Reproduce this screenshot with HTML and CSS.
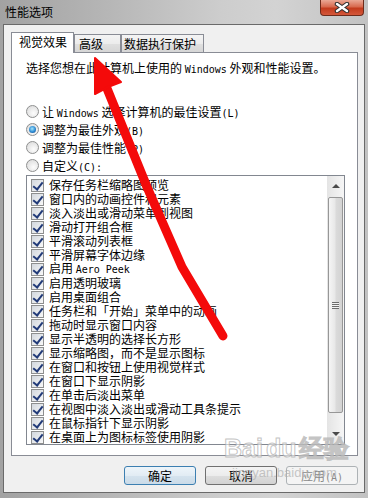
FILE: index.html
```html
<!DOCTYPE html>
<html>
<head>
  <title>性能选项</title>
  <link rel="stylesheet" href="styles.css">
</head>
<body>

  <div class="window">
    <div class="titlebar">
      <span class="title">性能选项</span>
      <div class="close">
        <svg width="16" height="11" viewBox="0 0 16 11">
          <path d="M3 2 L13 9 M13 2 L3 9" stroke="#2f2f2f" stroke-width="4.5" stroke-linecap="round"/>
          <path d="M3 2 L13 9 M13 2 L3 9" stroke="#fff" stroke-width="2.4" stroke-linecap="round"/>
        </svg>
      </div>
    </div>

    <div class="client">
      <div class="tabs">
        <div class="tab active">视觉效果</div>
        <div class="tab t2">高级</div>
        <div class="tab t3">数据执行保护</div>
      </div>

      <div class="panel">
        <p class="desc">选择您想在此计算机上使用的 <span class="en">Windows</span> 外观和性能设置。</p>

        <div class="radios">
          <div class="radio"><span class="dot"></span><span>让 <span class="en">Windows</span> 选择计算机的最佳设置<span class="en">(L)</span></span></div>
          <div class="radio"><span class="dot on"></span><span>调整为最佳外观<span class="en">(B)</span></span></div>
          <div class="radio"><span class="dot"></span><span>调整为最佳性能<span class="en">(P)</span></span></div>
          <div class="radio"><span class="dot"></span><span>自定义<span class="en">(C):</span></span></div>
        </div>

        <div class="listbox">
          <div class="items">
            <div class="item"><span class="check"></span>保存任务栏缩略图预览</div>
            <div class="item"><span class="check"></span>窗口内的动画控件和元素</div>
            <div class="item"><span class="check"></span>淡入淡出或滑动菜单到视图</div>
            <div class="item"><span class="check"></span>滑动打开组合框</div>
            <div class="item"><span class="check"></span>平滑滚动列表框</div>
            <div class="item"><span class="check"></span>平滑屏幕字体边缘</div>
            <div class="item"><span class="check"></span><span>启用 <span class="en">Aero Peek</span></span></div>
            <div class="item"><span class="check"></span>启用透明玻璃</div>
            <div class="item"><span class="check"></span>启用桌面组合</div>
            <div class="item"><span class="check"></span>任务栏和「开始」菜单中的动画</div>
            <div class="item"><span class="check"></span>拖动时显示窗口内容</div>
            <div class="item"><span class="check"></span>显示半透明的选择长方形</div>
            <div class="item"><span class="check"></span>显示缩略图，而不是显示图标</div>
            <div class="item"><span class="check"></span>在窗口和按钮上使用视觉样式</div>
            <div class="item"><span class="check"></span>在窗口下显示阴影</div>
            <div class="item"><span class="check"></span>在单击后淡出菜单</div>
            <div class="item"><span class="check"></span>在视图中淡入淡出或滑动工具条提示</div>
            <div class="item"><span class="check"></span>在鼠标指针下显示阴影</div>
            <div class="item"><span class="check"></span>在桌面上为图标标签使用阴影</div>
          </div>
          <div class="scrollbar">
            <div class="sb-btn"><span class="arrow-up"></span></div>
            <div class="thumb"><span class="grip"></span></div>
            <div class="track"></div>
            <div class="sb-btn"><span class="arrow-down"></span></div>
          </div>
        </div>
      </div>

      <div class="buttons">
        <div class="btn default">确定</div>
        <div class="btn">取消</div>
        <div class="btn disabled">应用<span class="en">(A)</span></div>
      </div>
    </div>

    <!-- watermark -->
    <div class="watermark">
      <div class="wm-logo">Bai<span class="wm-du">du</span>经验</div>
      <div class="wm-url">jingyan.baidu.com</div>
    </div>

    <!-- red arrow drawn over the dialog -->
    <svg class="arrow" width="368" height="498" viewBox="0 0 368 498">
      <path d="M106 86 L147 187 L182 267 L223 336" fill="none" stroke="#f40a0a" stroke-width="9" stroke-linecap="round" stroke-linejoin="round"/>
      <path d="M95 58 L121 82 L108 87 L95 94 Z" fill="#f40a0a" stroke="#f40a0a" stroke-width="2" stroke-linejoin="round"/>
    </svg>
  </div>

</body>
</html>
```

FILE: styles.css
```css
* {
  box-sizing: border-box;
}
body {
  margin: 0;
  font: 12px "Noto Sans CJK SC", sans-serif;
  color: #000;
}
.en {
  font-family: "DejaVu Sans Mono", monospace;
  font-size: 10px;
}
.window {
  position: relative;
  width: 368px;
  height: 498px;
  overflow: hidden;
  background: linear-gradient(to right, #a2a2a2 0%, #b3b3b3 25%, #cdcdcd 60%, #d3d3d3 75%, #c2c2c2 100%);
}
.titlebar {
  height: 24px;
  display: flex;
  align-items: flex-start;
}
.title {
  padding: 5px 0 0 5px;
  line-height: 14px;
  font-size: 12px;
}
.close {
  margin-left: auto;
  margin-right: 4px;
  width: 44px;
  height: 16px;
  border: 1px solid #6e2b1b;
  border-top: none;
  border-radius: 0 0 4px 4px;
  background: linear-gradient(#eaa895, #d86a4f 45%, #c33b1d 55%, #d4573a);
  display: flex;
  align-items: center;
  justify-content: center;
}

/* dialog body */
.client {
  margin-left: 3px;
  width: 362px;
  height: 469px;
  border: 1px solid #6a6a6a;
  background: #f0f0f0;
  padding: 7px 0 0 7px;
}
.tabs {
  display: flex;
  align-items: flex-end;
  height: 20px;
}
.tab {
  height: 18px;
  border: 1px solid #898c95;
  border-bottom: none;
  padding: 1px 0 0 4px;
  line-height: 16px;
  background: linear-gradient(#f4f4f4, #ececec 50%, #e0e0e0 50%, #d6d6d6);
}
.tab.active {
  width: 63px;
  height: 21px;
  margin-bottom: -1px;
  padding-left: 7px;
  background: #fff;
  position: relative;
  z-index: 1;
}
.t2 {
  width: 47px;
}
.t3 {
  width: 83px;
  padding-left: 2px;
}
.panel {
  width: 347px;
  height: 404px;
  border: 1px solid #898c95;
  background: #fff;
  padding: 8px 0 0 14px;
}
.desc {
  margin: 0;
  line-height: 14px;
}
.radios {
  margin-top: 25px;
}
.radio {
  display: flex;
  align-items: center;
  height: 18px;
}
.dot {
  width: 13px;
  height: 13px;
  margin-right: 3px;
  border-radius: 50%;
  border: 1px solid #8e8f8f;
  background: radial-gradient(circle at 60% 65%, #fdfdfd, #dcdcdc 85%);
  position: relative;
}
.dot.on::after {
  content: "";
  position: absolute;
  left: 2px;
  top: 2px;
  width: 7px;
  height: 7px;
  border-radius: 50%;
  background: radial-gradient(circle at 45% 40%, #a6e6fc, #2b8ad3 55%, #0c3a74);
}

/* list of effects */
.listbox {
  margin-top: 1px;
  width: 319px;
  height: 270px;
  border: 1px solid #828790;
  display: flex;
}
.items {
  flex: 1;
  padding: 2px 0 0 4px;
}
.item {
  display: flex;
  align-items: center;
  height: 14px;
  line-height: 14px;
}
.check {
  width: 13px;
  height: 13px;
  margin-right: 5px;
  border: 1px solid #8e8f8f;
  background: linear-gradient(135deg, #d3d8de, #f8f8f8);
  position: relative;
  flex-shrink: 0;
}
.check::after {
  content: "";
  position: absolute;
  left: 3px;
  top: 0;
  width: 4px;
  height: 8px;
  border: solid #213a78;
  border-width: 0 2px 2px 0;
  transform: rotate(38deg);
}
.scrollbar {
  width: 17px;
  display: flex;
  flex-direction: column;
  background: linear-gradient(to right, #e4e4e4, #f6f6f6);
}
.sb-btn {
  height: 20px;
  display: flex;
  align-items: center;
  justify-content: center;
}
.arrow-up {
  border-left: 4px solid transparent;
  border-right: 4px solid transparent;
  border-bottom: 4px solid #4a4a4a;
}
.arrow-down {
  border-left: 4px solid transparent;
  border-right: 4px solid transparent;
  border-top: 4px solid #4a4a4a;
}
.thumb {
  margin: 1px 1px 0;
  height: 216px;
  border: 1px solid #979797;
  border-radius: 2px;
  background: linear-gradient(to right, #f5f5f5, #e8e8e8 45%, #dadada 55%, #d3d3d3);
  display: flex;
  align-items: center;
  justify-content: center;
}
.grip {
  width: 7px;
  height: 7px;
  background: repeating-linear-gradient(to bottom, #6c6c6c 0 1px, #f2f2f2 1px 2px);
}
.track {
  flex: 1;
}

/* bottom buttons */
.buttons {
  width: 347px;
  display: flex;
  justify-content: flex-end;
  gap: 9px;
  margin-top: 10px;
}
.btn {
  width: 72px;
  height: 19px;
  border: 1px solid #707070;
  border-radius: 3px;
  text-align: center;
  line-height: 17px;
  background: linear-gradient(#f4f4f4, #ececec 50%, #dedede 50%, #d2d2d2);
}
.btn.default {
  border-color: #3c7fb1;
  background: linear-gradient(#eef5fa, #e2ecf4 50%, #d5e3ee 50%, #cbdbe8);
}
.btn.disabled {
  border-color: #adb2b5;
  background: #f4f4f4;
  color: #8a8a8a;
}

/* overlays */
.watermark {
  position: absolute;
  left: 224px;
  top: 434px;
  color: rgba(255, 255, 255, 0.55);
}
.wm-logo {
  font: bold 25px "Liberation Sans", sans-serif;
  line-height: 28px;
  -webkit-text-stroke: 1px rgba(170, 170, 170, 0.7);
}
.wm-du {
  margin: 0 3px;
}
.wm-url {
  margin: 3px 0 0 8px;
  font: 13px "Liberation Sans", sans-serif;
  color: rgba(175, 175, 175, 0.7);
}
.arrow {
  position: absolute;
  left: 0;
  top: 0;
  pointer-events: none;
}
```
